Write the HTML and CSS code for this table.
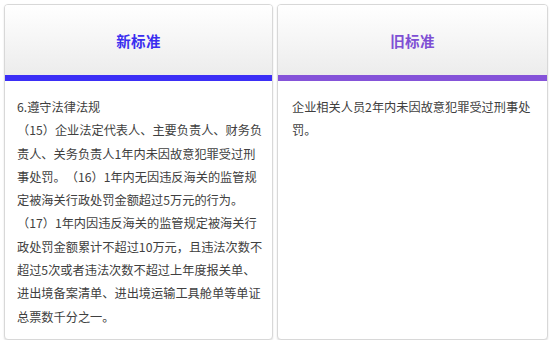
FILE: index.html
```html
<!DOCTYPE html>
<html lang="zh-CN">
<head>
<meta charset="utf-8">
<title>新旧标准对比</title>
<link rel="stylesheet" href="styles.css">
</head>
<body>
<div class="compare">
  <section class="card card-new">
    <header class="card-head"><h2 class="card-title">新标准</h2></header>
    <div class="card-bar"></div>
    <div class="card-body">
      <p class="line">6.遵守法律法规</p>
      <p class="line">（15）企业法定代表人、主要负责人、财务负责人、关务负责人1年内未因故意犯罪受过刑事处罚。（16）1年内无因违反海关的监管规定被海关行政处罚金额超过5万元的行为。</p>
      <p class="line">（17）1年内因违反海关的监管规定被海关行政处罚金额累计不超过10万元，且违法次数不超过5次或者违法次数不超过上年度报关单、进出境备案清单、进出境运输工具舱单等单证总票数千分之一。</p>
    </div>
  </section>
  <section class="card card-old">
    <header class="card-head"><h2 class="card-title">旧标准</h2></header>
    <div class="card-bar"></div>
    <div class="card-body">
      <p class="line">企业相关人员2年内未因故意犯罪受过刑事处罚。</p>
    </div>
  </section>
</div>
</body>
</html>
```

FILE: styles.css
```css
* { box-sizing: border-box; }
html, body { margin: 0; padding: 0; background: #fff; }
body {
  font-family: "Noto Sans CJK SC", "Noto Sans", sans-serif;
  color: #404040;
}
.compare {
  display: grid;
  grid-template-columns: 269px 271px;
  column-gap: 4px;
  padding: 4px 0 0 4px;
}
.card {
  height: 336px;
  border: 1px solid #d8d8d8;
  border-radius: 4px;
  box-shadow: 0 1px 2px rgba(0,0,0,0.12);
  overflow: hidden;
  display: flex;
  flex-direction: column;
  background: #fff;
}
.card-head {
  height: 70px;
  padding-top: 1px;
  display: flex;
  align-items: center;
  justify-content: center;
  background: linear-gradient(#ffffff, #ececec);
}
.card-title {
  margin: 0;
  font-size: 14.5px;
  font-weight: 700;
  letter-spacing: 0.3px;
}
.card-new .card-title { color: #3a2ef0; }
.card-old .card-title { color: #7e4fd4; }
.card-bar { height: 6px; }
.card-new .card-bar { background: #3b2ef6; }
.card-old .card-bar { background: #8553d9; }
.card-body {
  padding: 15px 8px 0 12px;
  font-size: 12.2px;
  line-height: 23.3px;
  text-spacing-trim: space-all;
}
.card-old .card-body { padding-left: 14px; }
.line { margin: 0; }
```
